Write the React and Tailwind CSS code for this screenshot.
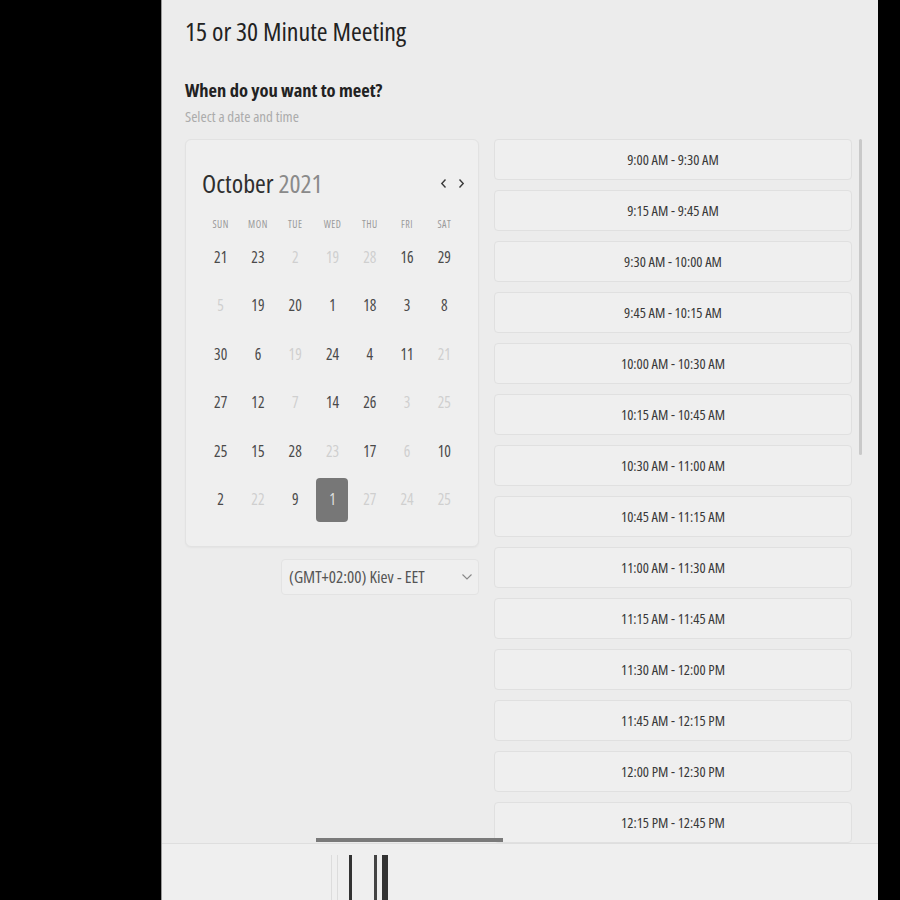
import React from "react";

const days = [
  [["21", 1], ["23", 1], ["2", 0], ["19", 0], ["28", 0], ["16", 1], ["29", 1]],
  [["5", 0], ["19", 1], ["20", 1], ["1", 1], ["18", 1], ["3", 1], ["8", 1]],
  [["30", 1], ["6", 1], ["19", 0], ["24", 1], ["4", 1], ["11", 1], ["21", 0]],
  [["27", 1], ["12", 1], ["7", 0], ["14", 1], ["26", 1], ["3", 0], ["25", 0]],
  [["25", 1], ["15", 1], ["28", 1], ["23", 0], ["17", 1], ["6", 0], ["10", 1]],
  [["2", 1], ["22", 0], ["9", 1], ["1", 2], ["27", 0], ["24", 0], ["25", 0]],
];

const weekdays = ["SUN", "MON", "TUE", "WED", "THU", "FRI", "SAT"];

const slots = [
  "9:00 AM - 9:30 AM",
  "9:15 AM - 9:45 AM",
  "9:30 AM - 10:00 AM",
  "9:45 AM - 10:15 AM",
  "10:00 AM - 10:30 AM",
  "10:15 AM - 10:45 AM",
  "10:30 AM - 11:00 AM",
  "10:45 AM - 11:15 AM",
  "11:00 AM - 11:30 AM",
  "11:15 AM - 11:45 AM",
  "11:30 AM - 12:00 PM",
  "11:45 AM - 12:15 PM",
  "12:00 PM - 12:30 PM",
  "12:15 PM - 12:45 PM",
];

const Chevron = ({ dir }) => (
  <svg width="7" height="11" viewBox="0 0 7 11" fill="none" stroke="#3a3a3a" strokeWidth="1.4">
    {dir === "left" ? <path d="M5.5 1.5 L1.8 5.5 L5.5 9.5" /> : <path d="M1.5 1.5 L5.2 5.5 L1.5 9.5" />}
  </svg>
);

const Calendar = () => (
  <div className="rounded-[6px] border border-[#e2e2e2] bg-[#efefef] pt-[27px] pb-[22px] pl-[16px] pr-[15px] shadow-[0_1px_2px_rgba(0,0,0,0.04)]">
    <div className="flex items-center justify-between h-[32px]">
      <div className="text-[26px] leading-[32px]">
        <span className="text-[#2e2e2e]">October</span>{" "}
        <span className="text-[#8a8a8a]">2021</span>
      </div>
      <div className="flex items-center gap-[11px] -mr-[2px]">
        <Chevron dir="left" />
        <Chevron dir="right" />
      </div>
    </div>
    <div className="grid grid-cols-7 mt-[17px] h-[17px] items-center">
      {weekdays.map((d) => (
        <div key={d} className="text-center text-[10px] tracking-[0.5px] text-[#9a9a9a]">
          {d}
        </div>
      ))}
    </div>
    {days.map((row, i) => (
      <div key={i} className="grid grid-cols-7 h-[48.5px] items-center">
        {row.map(([n, s], j) => (
          <div key={j} className="flex justify-center">
            {s === 2 ? (
              <div className="w-[32px] h-[44px] rounded-[4px] bg-[#777777] text-[#dedede] text-[15.5px] flex items-center justify-center">
                {n}
              </div>
            ) : (
              <span className={`text-[15.5px] ${s ? "text-[#4a4a4a]" : "text-[#cfcfcf]"}`}>{n}</span>
            )}
          </div>
        ))}
      </div>
    ))}
  </div>
);

export default function App() {
  return (
    <div
      className="flex w-[900px] h-[900px] bg-black overflow-hidden font-stretch-condensed"
      style={{ fontFamily: '"Open Sans", "Liberation Sans", sans-serif' }}
    >
      <div className="w-[161px] shrink-0" />
      <div className="w-[717px] shrink-0 flex flex-col bg-[#ececec] border-l border-[#9a9a9a]">
        <div className="flex-1 overflow-hidden pl-[23px] pt-[15px]">
          <h1 className="text-[26px] leading-[32px] text-[#222]">15 or 30 Minute Meeting</h1>
          <h2 className="mt-[31px] text-[18.5px] leading-[24px] font-bold text-[#222]">When do you want to meet?</h2>
          <p className="mt-[5px] text-[15px] leading-[18px] text-[#ababab]">Select a date and time</p>

          <div className="flex mt-[14px]">
            <div className="w-[294px] shrink-0">
              <Calendar />
              <div className="flex justify-end mt-[12px]">
                <div className="w-[198px] h-[36px] rounded-[4px] border border-[#e3e3e3] bg-[#efefef] flex items-center justify-between pl-[7px] pr-[5px]">
                  <span className="text-[17px] text-[#555]">(GMT+02:00) Kiev - EET</span>
                  <svg width="12" height="8" viewBox="0 0 12 8" fill="none" stroke="#888" strokeWidth="1.1">
                    <path d="M1.5 1.5 L6 6 L10.5 1.5" />
                  </svg>
                </div>
              </div>
            </div>

            <div className="ml-[15px] w-[358px] shrink-0 flex flex-col gap-[10px]">
              {slots.map((s) => (
                <div
                  key={s}
                  className="h-[41px] shrink-0 rounded-[4px] border border-[#e0e0e0] bg-[#efefef] flex items-center justify-center text-[14.5px] text-[#383838]"
                >
                  {s}
                </div>
              ))}
            </div>

            <div className="ml-[7px] w-[3px] h-[316px] bg-[#c9c9c9] rounded-full" />
          </div>
        </div>

        <div className="relative h-[57px] shrink-0 bg-[#efefef] border-t border-[#dedede]">
          <div className="absolute left-[154px] -top-[6px] w-[187px] h-[4px] bg-[#7a7a7a]" />
          <div className="flex h-full pt-[11px]">
            <div className="ml-[169px] w-[1px] bg-[#dcdcdc]" />
            <div className="ml-[5px] w-[1px] bg-[#dcdcdc]" />
            <div className="ml-[11px] w-[3px] bg-[#333]" />
            <div className="ml-[22px] w-[3px] bg-[#444]" />
            <div className="ml-[5px] w-[6px] bg-[#333]" />
          </div>
        </div>
      </div>
      <div className="flex-1" />
    </div>
  );
}
